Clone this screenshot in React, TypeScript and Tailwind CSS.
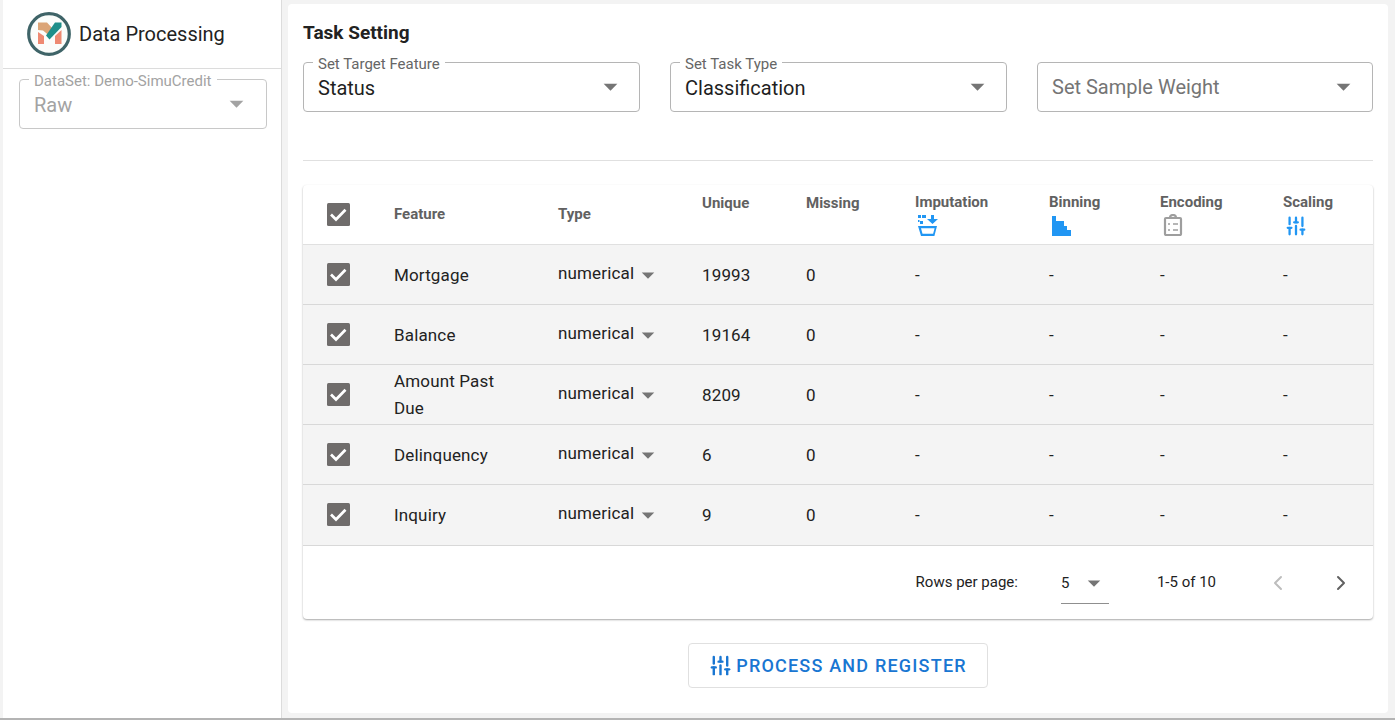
import { ChevronLeft, ChevronRight, SlidersVertical } from "lucide-react"

const rows = [
  { name: "Mortgage", unique: "19993" },
  { name: "Balance", unique: "19164" },
  { name: "Amount Past Due", unique: "8209" },
  { name: "Delinquency", unique: "6" },
  { name: "Inquiry", unique: "9" },
]

const gridCols = "grid grid-cols-[91px_164px_144px_104px_109px_134px_111px_123px_1fr]"

function Caret({ size = 24, className = "" }: { size?: number; className?: string }) {
  return (
    <svg width={size} height={size} viewBox="0 0 24 24" className={className} fill="currentColor">
      <path d="M7 10l5 5 5-5z" />
    </svg>
  )
}

function Check() {
  return (
    <svg width="30" height="30" viewBox="0 0 30 30">
      <rect x="4" y="4" width="23" height="23" rx="1.500" fill="#6f6c6b" />
      <path d="M8 15.500l5 5 9.500-9.800" fill="none" stroke="#fff" strokeWidth="2.700" />
    </svg>
  )
}

function Logo() {
  return (
    <svg width="46" height="46" viewBox="0 0 46 46">
      <circle cx="23" cy="23" r="20.3" fill="#fbfdfb" stroke="#3f6468" strokeWidth="3.2" />
      <path d="M12 21l6 4v8h-6z" fill="#ee8a72" />
      <path d="M29 25l6.500-6v14H29z" fill="#ee8a72" />
      <path d="M12 11.500h9l6 6.500-4.500 6-5.500-4.500-5-.5z" fill="#dba577" />
      <path d="M29 11.500h6.500V16l-12 12.500-3.500-4z" fill="#1f8f8a" />
    </svg>
  )
}

function Field({ label, value, muted, className = "" }: { label?: string; value: string; muted?: boolean; className?: string }) {
  return (
    <div className={`relative flex h-[50px] items-center justify-between rounded border border-[#b5b5b5] pl-[14px] pr-[12px] ${className}`}>
      {label && (
        <span className="absolute -top-[7px] left-[9px] bg-white px-[5px] text-[15px] leading-[16px] text-[#666]">{label}</span>
      )}
      <span className={`text-[20px] ${muted ? "-mt-[1px] text-[#757575]" : "mt-[1px] text-[#1f1f1f]"}`}>{value}</span>
      <Caret size={33} className="-mt-[1px] text-[#757575]" />
    </div>
  )
}

function HeadIcon({ name }: { name: string }) {
  if (name === "Imputation") {
    return (
      <svg width="20" height="21" viewBox="0 0 20 21" fill="#2196f3" className="ml-[3px]">
        <path d="M0 0h3v3H0zM4 0h4v3H4zM2 6h3v3H2zM0 5h1.500v2H0z" />
        <path d="M13 0h3v4h4l-5.500 5L9 4h4z" />
        <path d="M0 11h19l-2.600 10H3zm3 2.200 1.500 5.600h10.600l1.500-5.600z" fillRule="evenodd" />
      </svg>
    )
  }
  if (name === "Binning") {
    return (
      <svg width="20" height="21" viewBox="0 0 20 21" fill="#2196f3" className="ml-[3px] mt-[1px]">
        <path d="M0 0h4v5h8v5h3v4h4v6H0z" />
      </svg>
    )
  }
  if (name === "Encoding") {
    return (
      <svg width="20" height="22" viewBox="0 0 20 22" fill="none" stroke="#9e9e9e" strokeWidth="2.200" className="-mt-[1px] ml-[3px]">
        <rect x="2" y="4" width="16" height="17" rx="1" />
        <path d="M7 4c0-4 6-4 6 0" />
        <path d="M5 10h2M10 10h5M5 16h2M10 16h5" strokeWidth="1.600" />
      </svg>
    )
  }
  return <SlidersVertical size={22} strokeWidth={2.5} className="ml-[2px] text-[#2196f3]" />
}

export default function App() {
  return (
    <div className="h-[721px] overflow-hidden bg-white pb-[1px] pr-[3px] font-['Roboto',sans-serif]">
      <div className="flex h-[720px] border-b-2 border-[#b4b4b4] bg-[#f3f3f3] pl-[3px]">
        <aside className="w-[279px] shrink-0 border-r border-[#dcdcdc] bg-white">
          <div className="flex h-[69px] items-center gap-[7px] border-b border-[#dcdcdc] pl-[23px]">
            <Logo />
            <span className="-mt-[1px] text-[20px] text-[#222]">Data Processing</span>
          </div>
          <div className="pl-4 pr-[14px] pt-[10px]">
            <div className="relative flex h-[50px] items-center justify-between rounded border border-[#c8c8c8] pl-[14px] pr-[13px]">
              <span className="absolute -top-[7px] left-[9px] bg-white px-[5px] text-[15px] leading-[16px] text-[#a3a3a3]">DataSet: Demo-SimuCredit</span>
              <span className="mt-[1px] text-[20px] text-[#a3a3a3]">Raw</span>
              <Caret size={33} className="-mt-[2px] text-[#a3a3a3]" />
            </div>
          </div>
        </aside>

        <main className="mb-[5px] ml-[6px] mr-[7px] mt-[4px] flex flex-1 flex-col rounded bg-white px-[15px]">
          <h2 className="mt-[17px] text-[19px] font-bold leading-[24px] text-[#222]">Task Setting</h2>
          <div className="mt-[17px] flex gap-[30px] border-b border-[#e0e0e0] pb-[48px]">
            <Field label="Set Target Feature" value="Status" className="w-[337px]" />
            <Field label="Set Task Type" value="Classification" className="w-[337px]" />
            <Field value="Set Sample Weight" muted className="flex-1" />
          </div>

          <div className="mt-[24px] rounded bg-white shadow-[0_1px_2px_rgba(0,0,0,0.35)]">
            <div className={`${gridCols} h-[60px] items-center border-b border-[#e0e0e0] text-[15px] font-bold text-[#616161]`}>
              <div className="-mt-[1px] flex pl-[20px]"><Check /></div>
              <div>Feature</div>
              <div>Type</div>
              <div className="-mt-[23px]">Unique</div>
              <div className="-mt-[23px]">Missing</div>
              {["Imputation", "Binning", "Encoding", "Scaling"].map((name) => (
                <div key={name} className="flex flex-col">
                  <span className="leading-[16px]">{name}</span>
                  <span className="mt-[5px] h-[20px]"><HeadIcon name={name} /></span>
                </div>
              ))}
            </div>
            {rows.map((row, i) => (
              <div
                key={row.name}
                className={`${gridCols} ${i === 4 ? "h-[61px] pt-[1px]" : "h-[60px] pt-[2px]"} items-center border-b border-[#d8d8d8] bg-[#f4f4f4] text-[17px] tracking-[0.15px] text-[#222]`}
              >
                <div className="-mt-[3px] flex pl-[20px]"><Check /></div>
                <div className={`w-[120px] leading-[27px] ${i === 2 ? "-mt-[2px]" : ""}`}>{row.name}</div>
                <div className="-mt-[3px] flex items-center">
                  numerical
                  <Caret size={30} className="-ml-[1px] mt-[1px] text-[#757575]" />
                </div>
                <div>{row.unique}</div>
                <div>0</div>
                <div>-</div>
                <div>-</div>
                <div>-</div>
                <div>-</div>
              </div>
            ))}
            <div className="flex h-[73px] items-center justify-end text-[15px] text-[#222]">
              <span>Rows per page:</span>
              <div className="ml-[43px] flex h-[42px] w-[48px] items-center justify-between border-b border-[#8f8f8f] pt-[2px]">
                <span>5</span>
                <Caret size={30} className="text-[#757575]" />
              </div>
              <span className="ml-[48px]">1-5 of 10</span>
              <ChevronLeft size={24} className="ml-[50px] text-[#bdbdbd]" />
              <ChevronRight size={24} className="ml-[39px] mr-[20px] text-[#616161]" />
            </div>
          </div>

          <div className="mt-[24px] flex justify-center">
            <button className="flex h-[45px] w-[300px] items-center justify-center gap-[4px] rounded border border-[#e0e0e0] bg-white text-[18px] font-medium tracking-[1.2px] text-[#1976d2]">
              <SlidersVertical size={23} strokeWidth={2.5} />
              PROCESS AND REGISTER
            </button>
          </div>
        </main>
      </div>
    </div>
  )
}
